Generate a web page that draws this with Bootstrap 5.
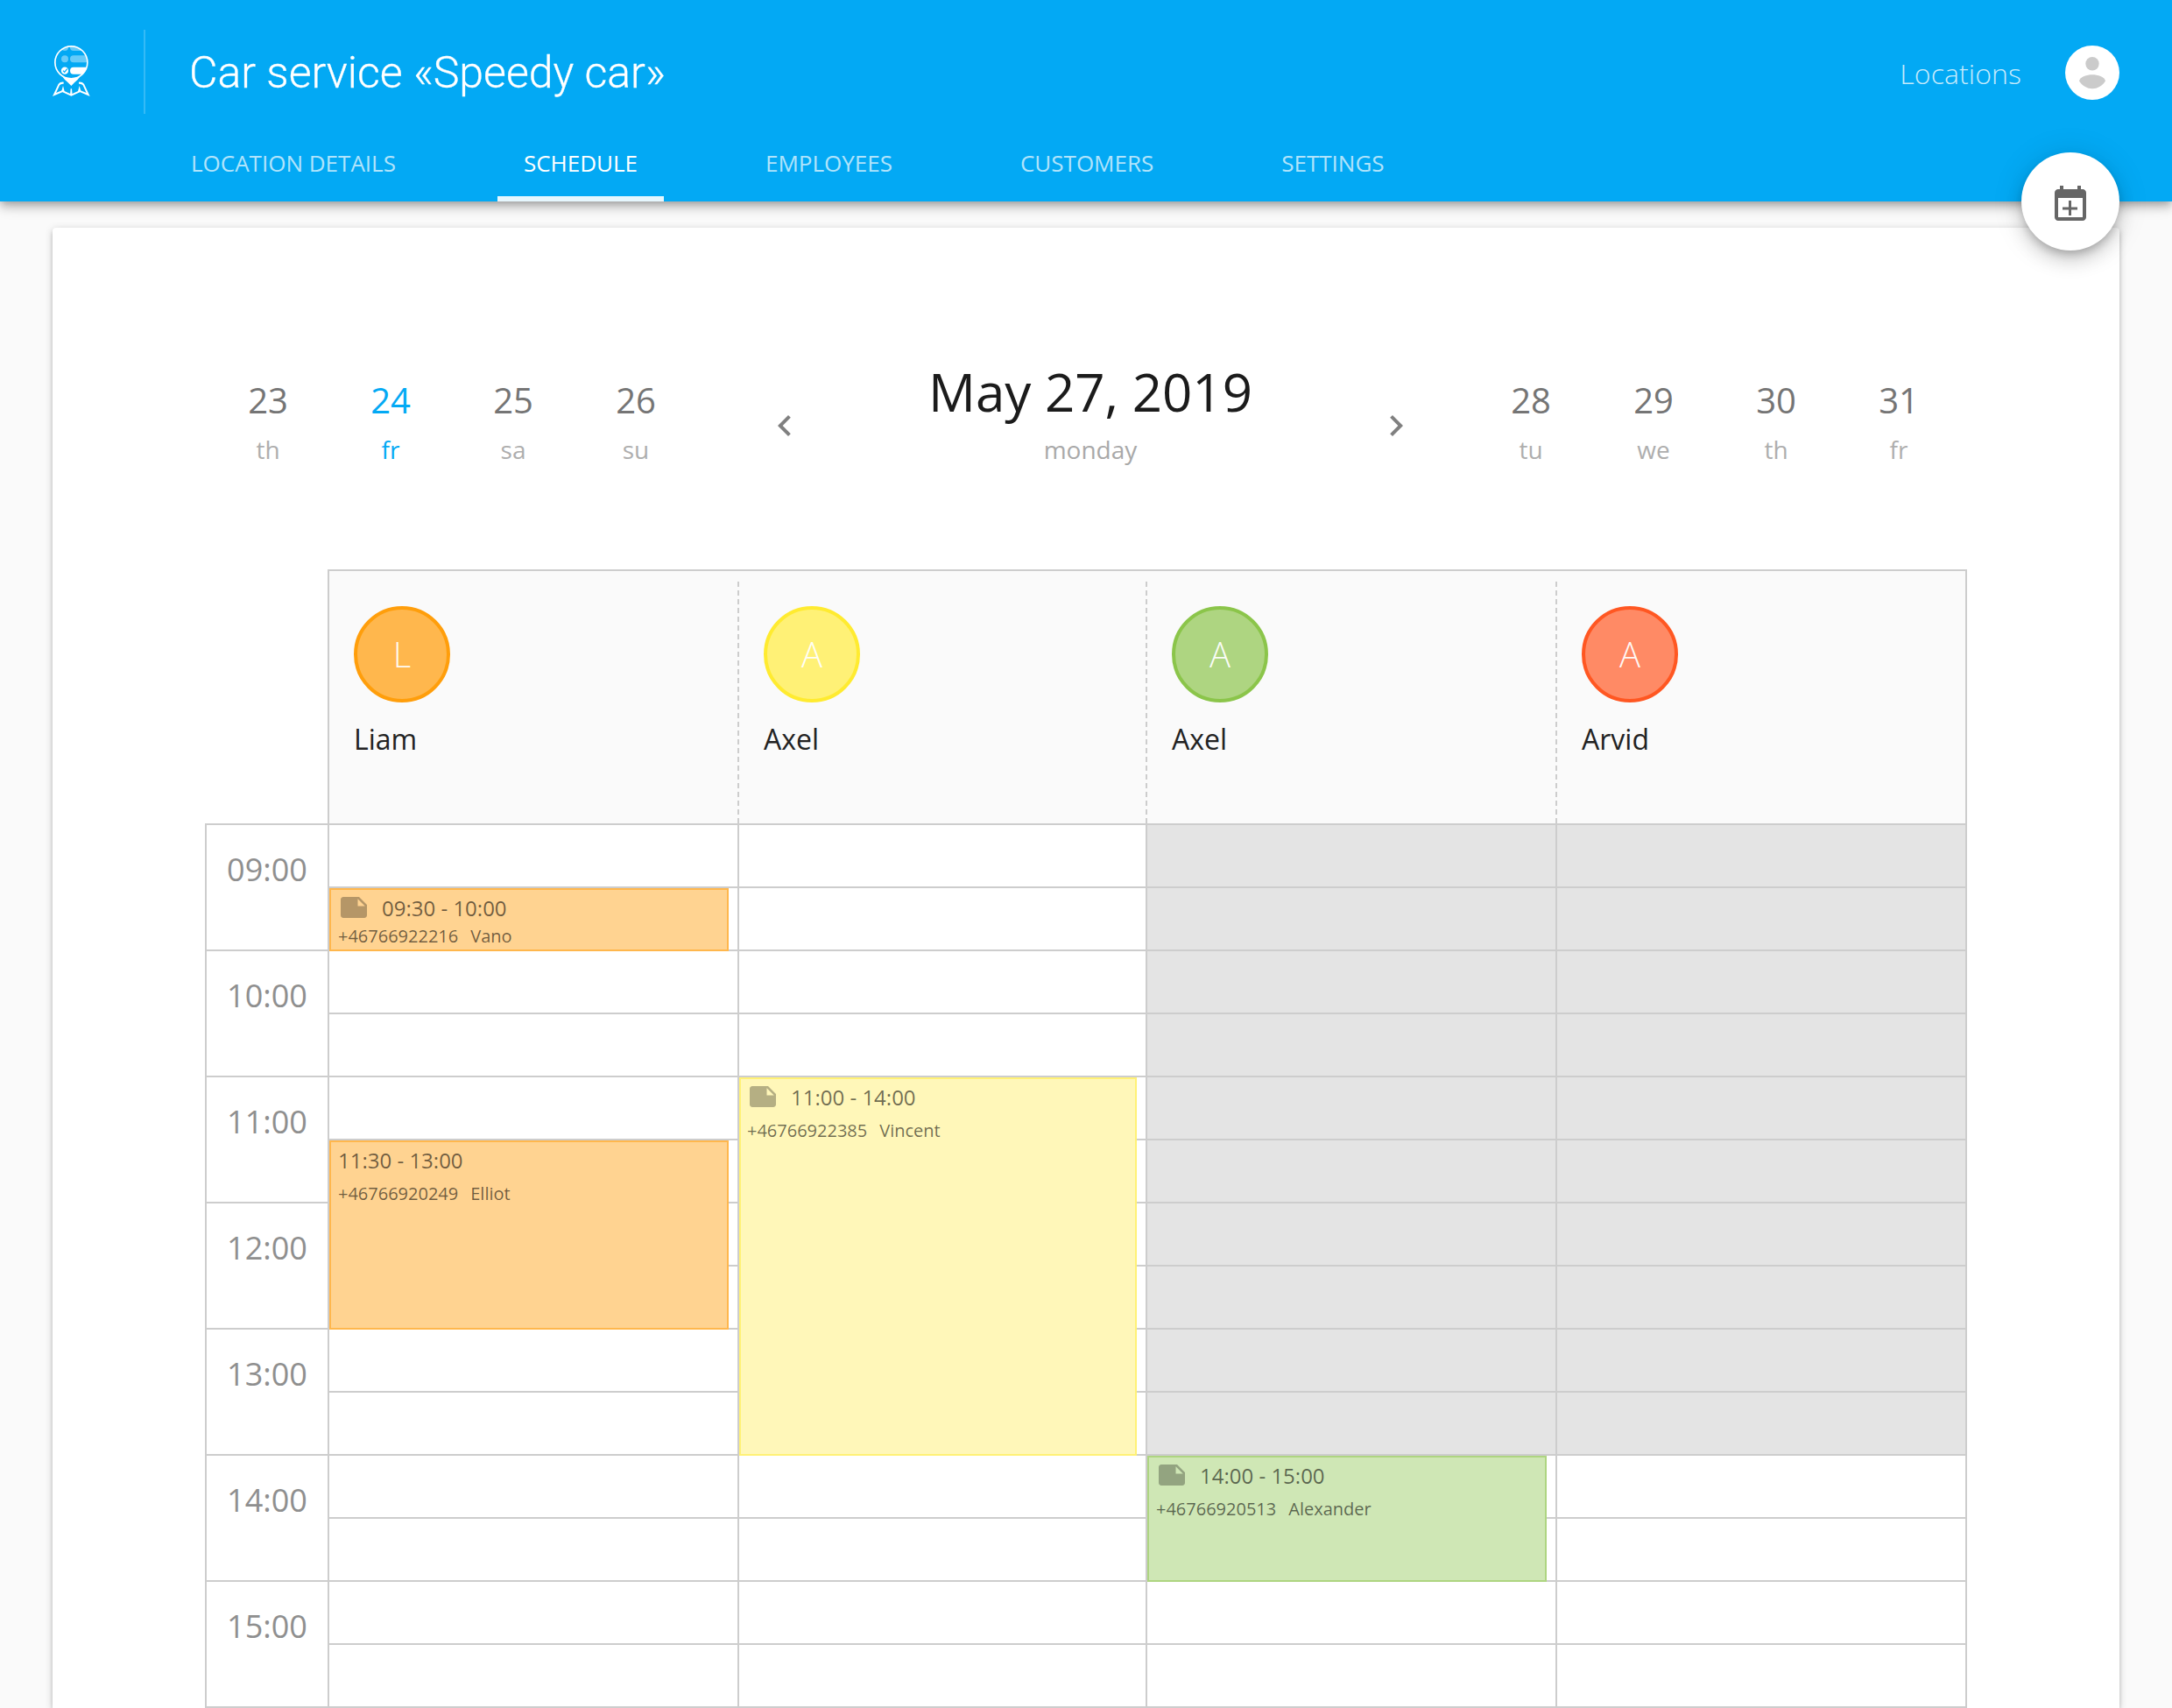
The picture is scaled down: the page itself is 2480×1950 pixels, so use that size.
<!DOCTYPE html>
<html lang="en">
<head>
<meta charset="utf-8">
<meta name="viewport" content="width=device-width, initial-scale=1">
<title>Car service «Speedy car»</title>
<link href="https://cdn.jsdelivr.net/npm/bootstrap@5.3.0/dist/css/bootstrap.min.css" rel="stylesheet">
<style>
:root { --sky: #03a9f4; --line: #cdcdcd; }
body { font-family: "Open Sans", sans-serif; background: #fafafa; height: 1950px; overflow: hidden; color: #1b1b1b; }

.app-header { height: 230px; background: var(--sky); z-index: 2;
  box-shadow: 0 4px 8px -2px rgba(0,0,0,.2), 0 8px 10px 0 rgba(0,0,0,.14), 0 2px 20px 0 rgba(0,0,0,.12); }
.header-row { height: 166px; padding: 0 60px; }
.brand-logo { width: 44px; height: 62px; margin-bottom: 4px; }
.header-rule { width: 2px; height: 96px; margin: 0 50px 2px 60px; background: rgba(255,255,255,.2); }
.app-title { font: 300 50px/60px Roboto, sans-serif; color: #fff; -webkit-text-stroke: .3px #fff; }
.locations-link { font-size: 32px; line-height: 48px; font-weight: 300; letter-spacing: .1px; color: rgba(255,255,255,.78); margin: 2px 50px 0 0; }
.user-pic { width: 62px; height: 62px; }
.main-tabs { height: 64px; padding-left: 188px; gap: 86px; }
.main-tabs .nav-link { height: 64px; padding: 0 30px; font-size: 26px; line-height: 40px; color: rgba(255,255,255,.7); text-transform: uppercase; border-radius: 0; }
.main-tabs .nav-link.active { color: #fff; border-bottom: 6px solid rgba(255,255,255,.9); }
.fab { right: 60px; top: 174px; width: 112px; height: 112px; background: #fff;
  box-shadow: 0 6px 10px -2px rgba(0,0,0,.2), 0 12px 20px 0 rgba(0,0,0,.14), 0 2px 36px 0 rgba(0,0,0,.12); }
.fab svg { margin-top: 8px; }

.sheet { margin: 30px 60px 0; height: 1690px; border-radius: 4px 4px 0 0; background: #fff; overflow: hidden;
  box-shadow: 0 2px 10px 0 rgba(0,0,0,.2), 0 4px 4px 0 rgba(0,0,0,.14), 0 6px 2px -4px rgba(0,0,0,.12); }
.date-strip { padding-left: 176px; height: 280px; }
.day-cell { width: 140px; color: #aeaeae; font-size: 28px; line-height: 53px; }
.day-cell b { display: block; font-weight: 400; font-size: 40px; line-height: 60px; color: #757575; }
.day-cell.today, .day-cell.today b { color: var(--sky); }
.step-btn { width: 48px; height: 48px; margin-bottom: 30px; }
.step-prev { margin-left: 76px; }
.step-next { margin-right: 60px; }
.current-date { width: 650px; font-size: 28px; line-height: 53px; color: #a9a9a9; }
.current-date h1 { margin: 0; font-size: 60px; line-height: 80px; font-weight: 400; color: #1b1b1b; }

.planner { margin: 110px 0 0 174px; }
.hours { width: 140px; margin-top: 290px; border-left: 2px solid var(--line); }
.hours div { height: 144px; border-top: 2px solid var(--line); font-size: 36px; line-height: 102px; color: #8f8f8f; }
.hours div:last-child { height: 2px; }
.lane { width: 468px; }
.lane.narrow { width: 466px; }
.lane:last-child { width: 470px; border-right: 2px solid var(--line); }
.lane-head { height: 290px; border-top: 2px solid var(--line); background: #fafafa; padding-top: 12px; }
.lane-head-in { height: 276px; padding: 28px 0 0 28px; border-left: 2px dashed var(--line); }
.lane:nth-child(2) .lane-head { padding-top: 0; }
.lane:nth-child(2) .lane-head-in { height: 288px; padding-top: 40px; border-left-style: solid; }
.initial { width: 110px; height: 110px; border: 4px solid; font-size: 40px; font-weight: 300; }
.initial span { color: rgba(255,255,255,.95); }
.person { font-size: 32px; line-height: 48px; margin-top: 18px; color: #222; }
.lane-body { border-left: 2px solid var(--line); }
.slot { height: 72px; border-top: 2px solid var(--line); }
.slot:nth-child(15) { height: 2px; }
.slot.off { background: #e4e4e4; }

.t-orange { background: #ffb74d; border-color: #ff9e0b; }
.t-yellow { background: #fff176; border-color: #ffeb30; }
.t-green { background: #aed581; border-color: #8bc54a; }
.t-red { background: #ff8a65; border-color: #ff5722; }

.visit { left: 0; width: 456px; border: 2px solid; padding: 4px 0 0 8px; color: rgba(0,0,0,.57); }
.visit.narrow { width: 454px; padding-left: 7px; }
.v-orange { background: #ffd391; border-color: #ffb74d; }
.v-yellow { background: #fff7b9; border-color: #fff176; }
.v-green { background: #cfe7b5; border-color: #aed581; }
.visit-time { font-size: 24px; line-height: 33px; height: 33px; }
.visit-time svg { width: 36px; height: 36px; margin: -2px 14px 0 0; flex: none; }
.visit-who { font-size: 20px; line-height: 44px; }
.visit-who span + span { margin-left: 14px; }
.visit.tight .visit-who { line-height: 32px; }
.from-0930 { top: 74px; height: 72px; }
.from-1130 { top: 362px; height: 216px; }
.from-1100 { top: 290px; height: 432px; }
.from-1400 { top: 722px; height: 144px; }
</style>
</head>
<body>
<svg class="d-none" xmlns="http://www.w3.org/2000/svg">
  <symbol id="note" viewBox="0 0 24 24"><path fill="#000" fill-opacity=".29" d="M22 10l-6-6H4c-1.1 0-2 .9-2 2v12.01c0 1.1.9 1.99 2 1.99l16-.01c1.1 0 2-.89 2-2v-8zm-7-4.5l5.5 5.5H15V5.5z"/></symbol>
</svg>

<header class="app-header position-relative">
  <div class="header-row d-flex align-items-center">
    <svg class="brand-logo" viewBox="60 30 132 186">
      <defs><clipPath id="pin"><circle cx="124" cy="95" r="55"/></clipPath></defs>
      <g fill="#fff" clip-path="url(#pin)">
        <g fill-opacity=".4"><circle cx="102" cy="42" r="12"/><rect x="120" y="30" width="80" height="24" rx="12"/><circle cx="102" cy="82" r="12"/><rect x="120" y="70" width="80" height="24" rx="12"/></g>
        <circle cx="102" cy="122" r="12.5"/><rect x="120" y="110" width="80" height="24" rx="12"/>
      </g>
      <path d="M96 122l5 5 9-11" fill="none" stroke="#03a9f4" stroke-width="3.6"/>
      <circle cx="124" cy="94" r="55.5" fill="none" stroke="#fff" stroke-width="5"/>
      <path fill="#fff" d="M92 140Q124 157 156 140Q147 153 135 163L124 174L113 163Q101 153 92 140z"/>
      <path fill="none" stroke="#fff" stroke-width="6" stroke-linejoin="miter" d="M98 164Q87 163 82 170L66 204L94 192L124 206L154 192L182 204L166 170Q161 163 150 164"/>
      <path fill="#fff" d="M96 174L101 193L90 195zM152 174L158 195L147 193zM122 184h4l2 22h-8z"/>
    </svg>
    <div class="header-rule"></div>
    <div class="app-title">Car service «Speedy car»</div>
    <a class="locations-link ms-auto text-decoration-none" href="#">Locations</a>
    <svg class="user-pic" viewBox="0 0 62 62"><circle cx="31" cy="31" r="31" fill="#fff"/><circle cx="31" cy="20.7" r="7.7" fill="#cbcbcb"/><path fill="#cbcbcb" d="M16 40.5C17 35.500 25 33.300 31 33.300S45 35.500 46 40.500C43 45.500 37 49.300 31 49.300S19 45.500 16 40.500z"/></svg>
  </div>
  <nav class="nav main-tabs flex-nowrap">
    <a class="nav-link" href="#">Location details</a>
    <a class="nav-link active" href="#">Schedule</a>
    <a class="nav-link" href="#">Employees</a>
    <a class="nav-link" href="#">Customers</a>
    <a class="nav-link" href="#">Settings</a>
  </nav>
  <button class="fab btn p-0 border-0 rounded-circle position-absolute d-flex align-items-center justify-content-center" aria-label="Add visit">
    <svg width="48" height="48" viewBox="0 0 24 24" fill="#666"><path d="M19 3h-1V1h-2v2H8V1H6v2H5c-1.100 0-2 .9-2 2v14c0 1.100.9 2 2 2h14c1.100 0 2-.9 2-2V5c0-1.100-.9-2-2-2zm0 16H5V8h14v11z"/><path d="M11 9.500h1.500v3.700H16v1.500h-3.500V18H11v-3.300H7.500v-1.500H11z"/></svg>
  </button>
</header>

<main class="sheet">
  <div class="date-strip d-flex align-items-end text-center">
    <div class="day-cell"><b>23</b>th</div>
    <div class="day-cell today"><b>24</b>fr</div>
    <div class="day-cell"><b>25</b>sa</div>
    <div class="day-cell"><b>26</b>su</div>
    <svg class="step-btn step-prev" viewBox="0 0 24 24"><path fill="#808080" d="M15.410 7.410L14 6l-6 6 6 6 1.410-1.410L10.830 12z"/></svg>
    <div class="current-date"><h1>May 27, 2019</h1>monday</div>
    <svg class="step-btn step-next" viewBox="0 0 24 24"><path fill="#808080" d="M10 6L8.590 7.410 13.170 12l-4.580 4.590L10 18l6-6z"/></svg>
    <div class="day-cell"><b>28</b>tu</div>
    <div class="day-cell"><b>29</b>we</div>
    <div class="day-cell"><b>30</b>th</div>
    <div class="day-cell"><b>31</b>fr</div>
  </div>

  <div class="planner d-flex">
    <div class="hours text-center">
      <div>09:00</div><div>10:00</div><div>11:00</div><div>12:00</div><div>13:00</div><div>14:00</div><div>15:00</div><div></div>
    </div>

    <section class="lane">
      <div class="lane-head"><div class="lane-head-in">
        <div class="initial t-orange rounded-circle d-flex align-items-center justify-content-center"><span>L</span></div>
        <div class="person">Liam</div>
      </div></div>
      <div class="lane-body position-relative">
        <div class="slot"></div><div class="slot"></div><div class="slot"></div><div class="slot"></div><div class="slot"></div><div class="slot"></div><div class="slot"></div><div class="slot"></div><div class="slot"></div><div class="slot"></div><div class="slot"></div><div class="slot"></div><div class="slot"></div><div class="slot"></div><div class="slot"></div>
        <article class="visit tight v-orange from-0930 position-absolute">
          <div class="visit-time d-flex"><svg><use href="#note"/></svg>09:30 - 10:00</div>
          <div class="visit-who d-flex"><span>+46766922216</span><span>Vano</span></div>
        </article>
        <article class="visit v-orange from-1130 position-absolute">
          <div class="visit-time">11:30 - 13:00</div>
          <div class="visit-who d-flex"><span>+46766920249</span><span>Elliot</span></div>
        </article>
      </div>
    </section>

    <section class="lane narrow">
      <div class="lane-head"><div class="lane-head-in">
        <div class="initial t-yellow rounded-circle d-flex align-items-center justify-content-center"><span>A</span></div>
        <div class="person">Axel</div>
      </div></div>
      <div class="lane-body position-relative">
        <div class="slot"></div><div class="slot"></div><div class="slot"></div><div class="slot"></div><div class="slot"></div><div class="slot"></div><div class="slot"></div><div class="slot"></div><div class="slot"></div><div class="slot"></div><div class="slot"></div><div class="slot"></div><div class="slot"></div><div class="slot"></div><div class="slot"></div>
        <article class="visit narrow v-yellow from-1100 position-absolute">
          <div class="visit-time d-flex"><svg><use href="#note"/></svg>11:00 - 14:00</div>
          <div class="visit-who d-flex"><span>+46766922385</span><span>Vincent</span></div>
        </article>
      </div>
    </section>

    <section class="lane">
      <div class="lane-head"><div class="lane-head-in">
        <div class="initial t-green rounded-circle d-flex align-items-center justify-content-center"><span>A</span></div>
        <div class="person">Axel</div>
      </div></div>
      <div class="lane-body position-relative">
        <div class="slot off"></div><div class="slot off"></div><div class="slot off"></div><div class="slot off"></div><div class="slot off"></div><div class="slot off"></div><div class="slot off"></div><div class="slot off"></div><div class="slot off"></div><div class="slot off"></div><div class="slot"></div><div class="slot"></div><div class="slot"></div><div class="slot"></div><div class="slot"></div>
        <article class="visit v-green from-1400 position-absolute">
          <div class="visit-time d-flex"><svg><use href="#note"/></svg>14:00 - 15:00</div>
          <div class="visit-who d-flex"><span>+46766920513</span><span>Alexander</span></div>
        </article>
      </div>
    </section>

    <section class="lane">
      <div class="lane-head"><div class="lane-head-in">
        <div class="initial t-red rounded-circle d-flex align-items-center justify-content-center"><span>A</span></div>
        <div class="person">Arvid</div>
      </div></div>
      <div class="lane-body">
        <div class="slot off"></div><div class="slot off"></div><div class="slot off"></div><div class="slot off"></div><div class="slot off"></div><div class="slot off"></div><div class="slot off"></div><div class="slot off"></div><div class="slot off"></div><div class="slot off"></div><div class="slot"></div><div class="slot"></div><div class="slot"></div><div class="slot"></div><div class="slot"></div>
      </div>
    </section>
  </div>
</main>
<script src="https://cdn.jsdelivr.net/npm/bootstrap@5.3.0/dist/js/bootstrap.bundle.min.js"></script>
</body>
</html>
